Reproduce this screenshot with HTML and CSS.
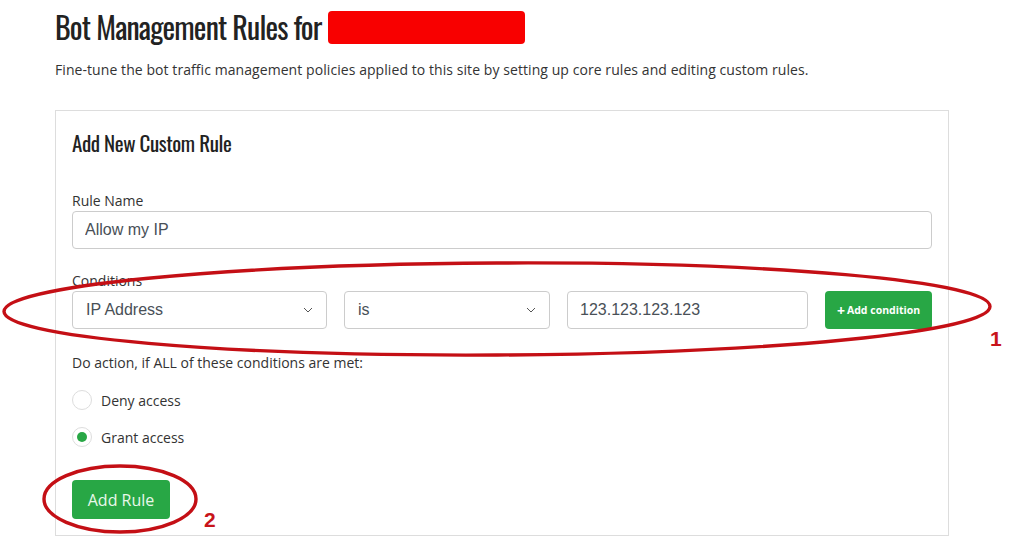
FILE: index.html
```html
<!DOCTYPE html>
<html>
<head>
<meta name="viewport" content="width=device-width, initial-scale=1.0">
<title>Bot Management Rules</title>
<link rel="stylesheet" href="styles.css">
</head>
<body>
<div class="page">
	<h1 class="page_title">Bot Management Rules for <span class="redacted"></span></h1>
	<p class="page_intro">Fine-tune the bot traffic management policies applied to this site by setting up core rules and editing custom rules.</p>

	<div class="card">
		<h2 class="card_title">Add New Custom Rule</h2>

		<label class="field_label" for="rule_name">Rule Name</label>
		<input class="text_input" type="text" id="rule_name" value="Allow my IP">

		<div class="field_label gap_conditions">Conditions</div>
		<div class="condition_row">
			<div class="fake_select sel_field">
				<span>IP Address</span>
				<svg width="10" height="6" viewBox="0 0 10 6"><path d="M1 1 L5 5 L9 1" fill="none" stroke="#555" stroke-width="1"/></svg>
			</div>
			<div class="fake_select sel_op">
				<span>is</span>
				<svg width="10" height="6" viewBox="0 0 10 6"><path d="M1 1 L5 5 L9 1" fill="none" stroke="#555" stroke-width="1"/></svg>
			</div>
			<input class="text_input cond_value" type="text" value="123.123.123.123">
			<button class="button btn_small"><span class="plus">+</span>Add condition</button>
		</div>

		<div class="field_label gap_action">Do action, if ALL of these conditions are met:</div>
		<div class="radio_row first_radio">
			<span class="radio"></span>
			<span>Deny access</span>
		</div>
		<div class="radio_row">
			<span class="radio checked"></span>
			<span>Grant access</span>
		</div>

		<button class="button btn_add">Add Rule</button>
	</div>
</div>

<!-- annotation marks drawn over the screenshot -->
<svg class="marks" width="1020" height="541" viewBox="0 0 1020 541">
	<ellipse cx="497" cy="309" rx="493" ry="46" transform="rotate(-0.3 497 309)" fill="none" stroke="#c40f15" stroke-width="3.4"/>
	<ellipse cx="120" cy="499" rx="76" ry="33" fill="none" stroke="#c40f15" stroke-width="3.4"/>
	<text x="990" y="346" class="mark_num">1</text>
	<text x="204" y="527" class="mark_num">2</text>
</svg>
</body>
</html>
```
FILE: styles.css
```css
body {
	margin: 0;
	background-color: white;
	font-family: "Open Sans", Arial, sans-serif;
	color: #333;
}

.page {
	padding-left: 55px;
	width: 894px;
}

.page_title {
	margin: 0;
	padding-top: 7px;
	height: 40px;
	font-family: "Oswald", "DejaVu Sans Condensed", "Liberation Sans Narrow", sans-serif;
	font-weight: normal;
	font-size: 30px;
	line-height: 40px;
	color: #222;
	display: flex;
	align-items: center;
	letter-spacing: -0.85px;
}

.redacted {
	display: inline-block;
	width: 197px;
	height: 33px;
	margin-left: 7px;
	background-color: #f80000;
	border-radius: 4px;
}

.page_intro {
	margin: 13px 0 0 0;
	font-size: 14px;
	line-height: 20px;
	letter-spacing: 0.07px;
	color: #333;
}

.card {
	margin-top: 30px;
	border: 1px solid #ddd;
	padding: 16px 16px 16px 16px;
	display: flex;
	flex-direction: column;
	align-items: flex-start;
}

.card_title {
	margin: 0;
	height: 32px;
	font-family: "Oswald", "DejaVu Sans Condensed", "Liberation Sans Narrow", sans-serif;
	font-weight: normal;
	font-size: 21px;
	line-height: 32px;
	color: #222;
	letter-spacing: -0.4px;
}

.field_label {
	margin-top: 32px;
	font-size: 14px;
	line-height: 20px;
	color: #333;
}

.gap_conditions { margin-top: 22px; }
.gap_action { margin-top: 24px; }

.text_input {
	box-sizing: border-box;
	width: 100%;
	height: 38px;
	margin: 0;
	padding: 0 12px;
	border: 1px solid #ccc;
	border-radius: 4px;
	font-family: "Liberation Sans", Arial, sans-serif;
	font-size: 16px;
	color: #495057;
	background: white;
	outline: none;
}

.condition_row {
	display: flex;
	gap: 17px;
	width: 100%;
	height: 38px;
}

.fake_select {
	box-sizing: border-box;
	height: 38px;
	padding: 0 13px 0 13px;
	border: 1px solid #ccc;
	border-radius: 4px;
	display: flex;
	align-items: center;
	justify-content: space-between;
	font-family: "Liberation Sans", Arial, sans-serif;
	font-size: 16px;
	color: #495057;
}

.sel_field { width: 255px; }
.sel_op { width: 206px; }
.cond_value { width: 241px; flex: none; }

.button {
	background-color: #28a745;
	color: white;
	border: none;
	border-radius: 4px;
	font-family: "Open Sans", Arial, sans-serif;
	cursor: pointer;
}

.btn_small {
	width: 107px;
	height: 38px;
	padding: 0;
	font-size: 10.5px;
	font-weight: bold;
	display: flex;
	align-items: center;
	justify-content: center;
}

.plus {
	font-size: 14px;
	margin-right: 2px;
}

.radio_row {
	margin-top: 17px;
	height: 20px;
	display: flex;
	align-items: center;
	gap: 9px;
	font-size: 14px;
	color: #333;
}

.radio {
	box-sizing: border-box;
	width: 20px;
	height: 20px;
	border: 1px solid #ddd;
	border-radius: 50%;
	display: flex;
	align-items: center;
	justify-content: center;
}

.radio.checked::after {
	content: "";
	width: 10px;
	height: 10px;
	border-radius: 50%;
	background-color: #28a745;
}

.btn_add {
	margin-top: 33px;
	width: 98px;
	height: 39px;
	font-size: 16px;
	color: #e8f8ea;
}

.marks {
	position: absolute;
	left: 0;
	top: 0;
	pointer-events: none;
}

.mark_num {
	font-family: "Liberation Sans", Arial, sans-serif;
	font-weight: bold;
	font-size: 21px;
	fill: #c8141a;
}
```
